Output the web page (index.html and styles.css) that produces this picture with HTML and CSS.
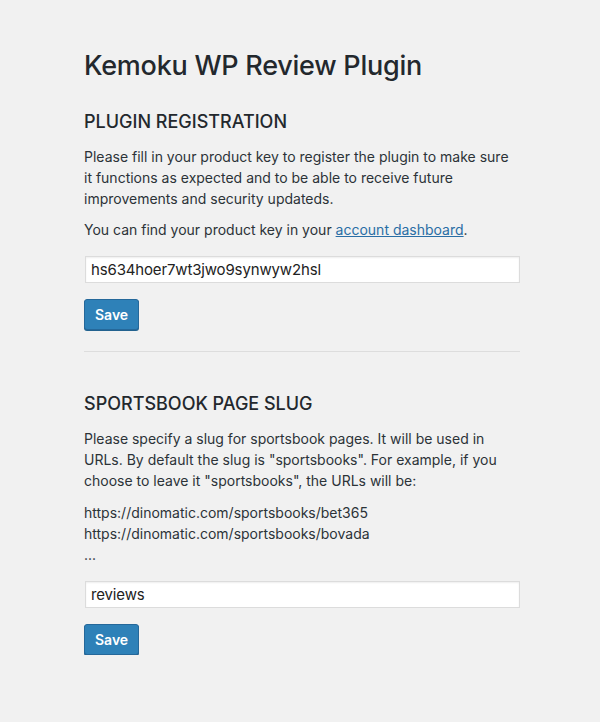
FILE: index.html
```html
<!DOCTYPE html>
<html>
<head>
<meta charset="utf-8">
<link rel="stylesheet" href="styles.css">
</head>
<body>
<div class="wrap">
  <h1 class="title">Kemoku WP Review Plugin</h1>
  <section class="section">
    <h2 class="heading">PLUGIN REGISTRATION</h2>
    <p class="text">Please fill in your product key to register the plugin to make sure it functions as expected and to be able to receive future improvements and security updateds.</p>
    <p class="text">You can find your product key in your <a class="link" href="#">account dashboard</a>.</p>
    <input class="field" type="text" value="hs634hoer7wt3jwo9synwyw2hsl">
    <button class="btn">Save</button>
  </section>
  <hr class="divider">
  <section class="section">
    <h2 class="heading">SPORTSBOOK PAGE SLUG</h2>
    <p class="text">Please specify a slug for sportsbook pages. It will be used in URLs. By default the slug is "sportsbooks". For example, if you choose to leave it "sportsbooks", the URLs will be:</p>
    <p class="text urls">https://dinomatic.com/sportsbooks/bet365<br>https://dinomatic.com/sportsbooks/bovada<br>...</p>
    <input class="field" type="text" value="reviews">
    <button class="btn">Save</button>
  </section>
</div>
</body>
</html>
```
FILE: styles.css
```css
html, body {
  margin: 0;
  padding: 0;
  background: #f1f1f1;
}
body {
  font-family: Inter, "Liberation Sans", sans-serif;
  color: #23282d;
}
.wrap {
  width: 436px;
  padding: 46px 0 0 84px;
}
.title {
  margin: 0;
  font-size: 27px;
  font-weight: 500;
  line-height: 40px;
  letter-spacing: -0.25px;
}
.section {
  display: flex;
  flex-direction: column;
  align-items: flex-start;
}
.heading {
  margin: 23px 0 0;
  font-size: 18px;
  font-weight: 500;
  line-height: 26px;
}
.text {
  margin: 11px 0 0;
  font-size: 14px;
  line-height: 21px;
  color: #2c3338;
}
.text + .text {
  margin-top: 10px;
}
.text + .urls {
  margin-top: 11px;
}
.link {
  color: #2a6ea5;
}
.field {
  box-sizing: border-box;
  margin: 16px 0 0 1px;
  width: 435px;
  height: 27px;
  padding: 2px 5px;
  border: 1px solid #dcdcdc;
  box-shadow: inset 0 1px 2px rgba(0,0,0,0.07);
  background: #fff;
  font-family: Inter, "Liberation Sans", sans-serif;
  font-size: 15px;
  letter-spacing: -0.15px;
  color: #222;
  border-radius: 0;
  outline: none;
}
.btn {
  margin-top: 16px;
  height: 31px;
  padding: 0 10px;
  background: #2e81b8;
  border: 1px solid #25689a;
  border-radius: 3px;
  box-shadow: 0 1px 0 #22628f;
  color: #fff;
  font-family: Inter, "Liberation Sans", sans-serif;
  font-size: 14px;
  font-weight: 600;
}
.divider {
  margin: 21px 0 0;
  border: 0;
  border-top: 1px solid #dddddd;
}
.divider + .section .heading {
  margin-top: 39px;
}
```
